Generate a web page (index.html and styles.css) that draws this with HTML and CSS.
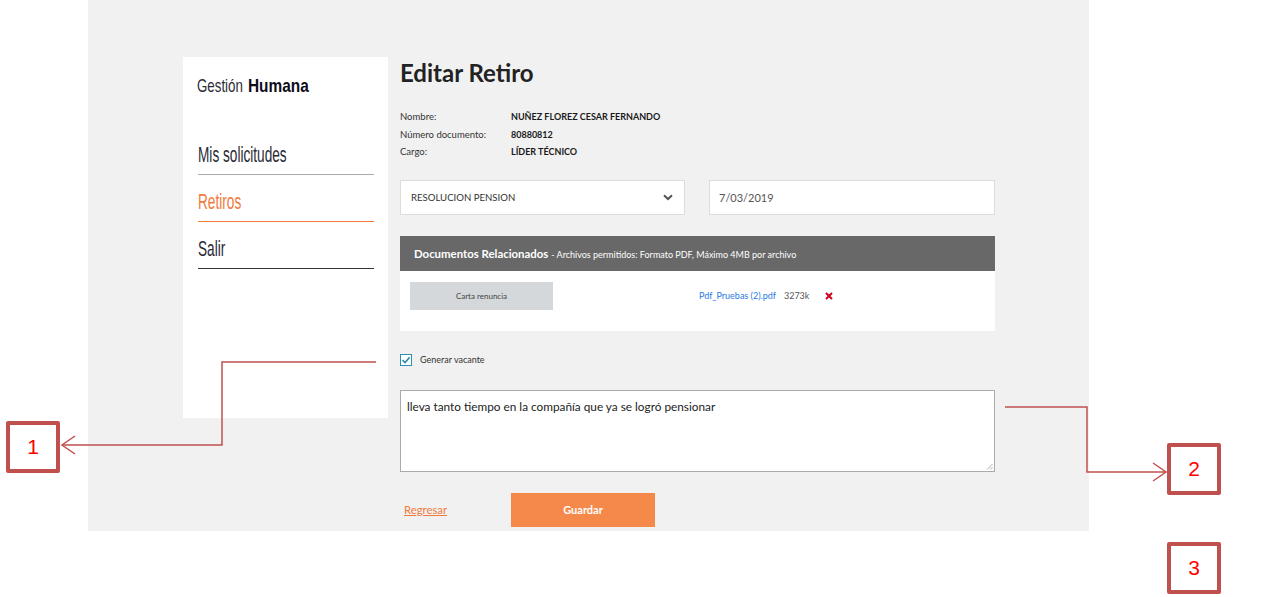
FILE: index.html
```html
<!DOCTYPE html>
<html lang="es">
<head>
<meta charset="utf-8">
<title>Editar Retiro</title>
<link rel="stylesheet" href="styles.css">
</head>
<body>
<div class="frame">
  <aside class="sidebar">
    <div class="brand"><span class="brand-light">Gestión</span><b class="brand-bold">Humana</b></div>
    <nav class="menu">
      <a class="item item-gray" href="#"><span class="narrow">Mis solicitudes</span></a>
      <a class="item item-active" href="#"><span class="narrow">Retiros</span></a>
      <a class="item item-dark" href="#"><span class="narrow">Salir</span></a>
    </nav>
  </aside>
  <main class="main">
    <h1 class="title">Editar Retiro</h1>
    <div class="info">
      <span class="lbl">Nombre:</span><span class="val">NUÑEZ FLOREZ CESAR FERNANDO</span>
      <span class="lbl">Número documento:</span><span class="val">80880812</span>
      <span class="lbl">Cargo:</span><span class="val">LÍDER TÉCNICO</span>
    </div>
    <div class="fields">
      <div class="field select">
        <span>RESOLUCION PENSION</span>
        <svg class="chev" width="10" height="7" viewBox="0 0 10 7"><path d="M1 1.2 L5 5 L9 1.2" fill="none" stroke="#555" stroke-width="2"/></svg>
      </div>
      <div class="field date">7/03/2019</div>
    </div>
    <section class="panel">
      <div class="panel-head"><p class="panel-title"><b>Documentos Relacionados</b> <span class="small">- Archivos permitidos: Formato PDF, Máximo 4MB por archivo</span></p></div>
      <div class="panel-body">
        <div class="doc-btn">Carta renuncia</div>
        <div class="file">
          <a class="file-link" href="#">Pdf_Pruebas (2).pdf</a>
          <span class="file-size">3273k</span>
          <svg class="del" width="8" height="8" viewBox="0 0 8 8"><path d="M1 1 L7 7 M7 1 L1 7" stroke="#d0021b" stroke-width="2"/></svg>
        </div>
      </div>
    </section>
    <label class="check">
      <span class="box"><svg width="10" height="10" viewBox="0 0 10 10"><path d="M1.5 5.2 L4 7.6 L8.6 2.4" fill="none" stroke="#2a8fb0" stroke-width="1.6"/></svg></span>
      <span class="check-text">Generar vacante</span>
    </label>
    <div class="textarea">lleva tanto tiempo en la compañía que ya se logró pensionar
      <svg class="grip" width="7" height="7" viewBox="0 0 7 7"><path d="M6.5 1 L1 6.5 M6.5 4 L4 6.5" stroke="#999" stroke-width="0.8"/></svg>
    </div>
    <div class="actions">
      <a class="back" href="#">Regresar</a>
      <button class="save">Guardar</button>
    </div>
  </main>
</div>

<svg class="arrows" width="1266" height="597" viewBox="0 0 1266 597">
  <g fill="none" stroke="#c0504d" stroke-width="1.5">
    <path d="M376 362 H222 V445 H62"/>
    <path d="M75 436 L62 445 L75 454"/>
    <path d="M1005 407 H1087 V472 H1166"/>
    <path d="M1153 463 L1166 472 L1153 481"/>
  </g>
</svg>
<div class="tag tag1">1</div>
<div class="tag tag2">2</div>
<div class="tag tag3">3</div>
</body>
</html>
```
FILE: styles.css
```css
html, body { margin: 0; padding: 0; background: #fff; }
body { width: 1266px; height: 597px; position: relative; overflow: hidden; font-family: Lato, "Open Sans", sans-serif; color: #222; }

.frame {
  width: 1001px; height: 531px; margin-left: 88px;
  background: #f1f1f1; box-sizing: border-box;
  padding: 57px 0 0 95px;
  display: flex; gap: 12px; align-items: flex-start;
}

.sidebar {
  width: 205px; height: 361px; background: #fff; box-sizing: border-box;
  padding: 17px 14px 0 14px;
  font-family: "Liberation Sans", Arial, sans-serif;
}
.brand { font-size: 19px; line-height: 24px; height: 24px; white-space: nowrap; color: #2b2b35; display: flex; }
.brand-light { display: inline-block; width: 51px; transform: scaleX(0.7); transform-origin: left center; }
.brand-bold { display: inline-block; color: #0c0c1a; transform: scaleX(0.81); transform-origin: left center; }
.menu { margin-top: 30px; display: flex; flex-direction: column; padding-left: 1px; }
.item {
  display: block; height: 47px; box-sizing: border-box; padding-top: 16px;
  font-size: 22px; line-height: 22px; text-decoration: none; white-space: nowrap;
  color: #2b2b35; border-bottom: 1px solid #aaa;
}
.narrow { display: inline-block; transform: scaleX(0.62); transform-origin: left center; }
.item-active { color: #f07a3c; border-bottom-color: #f07a3c; }
.item-dark { border-bottom-color: #333; }

.main { width: 595px; }
.title { margin: 0; font-size: 24px; line-height: 32px; font-weight: 700; color: #222; }
.info {
  margin-top: 19px; display: grid; grid-template-columns: 111px auto;
  font-size: 9.5px; line-height: 17.5px;
}
.lbl { color: #333; }
.val { font-weight: 700; font-size: 9px; color: #1a1a1a; }

.fields { margin-top: 19px; display: grid; grid-template-columns: 285px 286px; column-gap: 24px; }
.field {
  height: 35px; box-sizing: border-box; background: #fff; border: 1px solid #dcdcdc;
  display: flex; align-items: center; padding: 0 10px;
}
.select { font-size: 9.6px; color: #333; justify-content: space-between; }
.chev { margin-right: 1px; }
.date { font-size: 11px; color: #555; padding-left: 9px; }

.panel { margin-top: 21px; background: #fff; }
.panel-head {
  height: 35px; background: #686868; color: #fff; display: flex; align-items: center;
  padding-left: 14px;
}
.panel-title { margin: 0; font-size: 11.4px; white-space: nowrap; }
.panel-head .small { font-size: 9px; }
.panel-body { height: 60px; box-sizing: border-box; padding: 11px 10px; display: flex; }
.doc-btn {
  width: 143px; height: 28px; background: #d4d8db; color: #444; font-size: 8px;
  display: flex; align-items: center; justify-content: center;
}
.file { margin-left: 146px; height: 28px; display: flex; align-items: center; font-size: 9px; }
.file-link { color: #2a7ae2; text-decoration: none; }
.file-size { margin-left: 8px; color: #555; }
.del { margin-left: 16px; }

.check { margin-top: 23px; display: flex; align-items: center; height: 12px; }
.box {
  width: 12px; height: 12px; box-sizing: border-box; border: 1.5px solid #2a8fb0; background: #fff;
  display: flex; align-items: center; justify-content: center;
}
.check-text { margin-left: 8px; font-size: 9px; color: #333; }

.textarea {
  margin-top: 24px; height: 82px; box-sizing: border-box; background: #fff;
  border: 1px solid #aaa; padding: 8px 6px; font-size: 11.8px; color: #222; position: relative;
}
.grip { position: absolute; right: 1px; bottom: 1px; }

.actions { margin-top: 21px; display: flex; align-items: center; }
.back { width: 107px; padding-left: 4px; font-size: 11.3px; color: #f07a3c; text-decoration: underline; }
.save {
  width: 144px; height: 34px; border: 0; background: #f5894a; color: #fff;
  font-family: Lato, sans-serif; font-weight: 700; font-size: 11px;
}

.arrows { position: absolute; left: 0; top: 0; pointer-events: none; }
.tag {
  position: absolute; width: 54px; height: 52px; box-sizing: border-box;
  border: 4px solid #c0504d; border-radius: 2px; background: #fff;
  display: flex; align-items: center; justify-content: center;
  font-family: "Liberation Sans", Arial, sans-serif; font-size: 21px; color: #ff0000;
}
.tag1 { left: 6px; top: 421px; }
.tag2 { left: 1167px; top: 443px; }
.tag3 { left: 1167px; top: 542px; }
```
